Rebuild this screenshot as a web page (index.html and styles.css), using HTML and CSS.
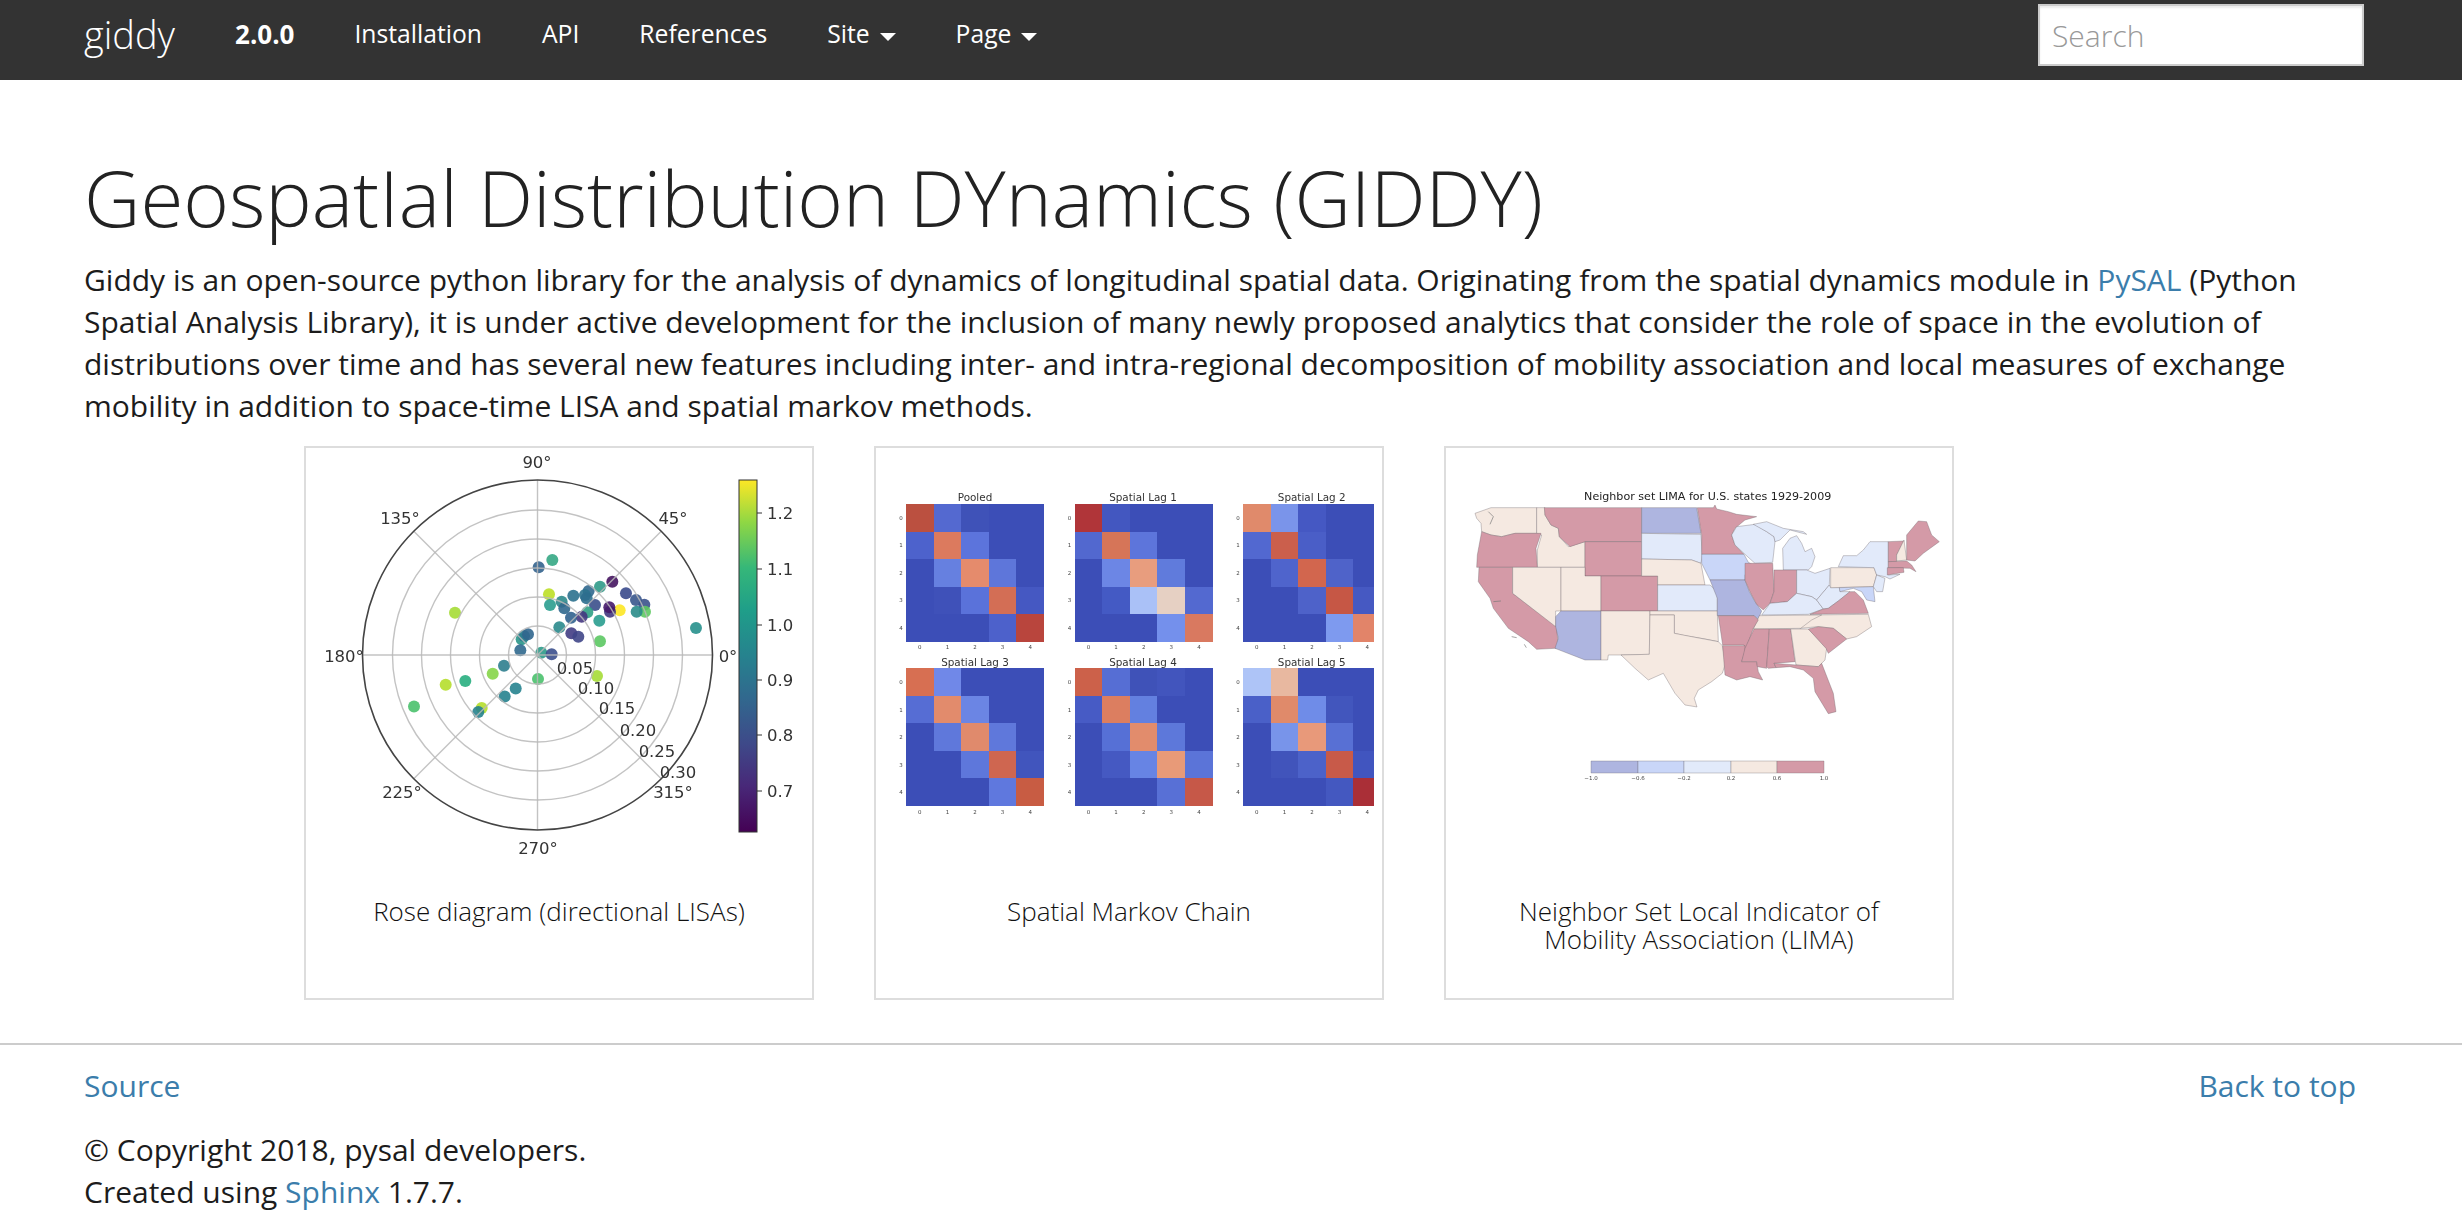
FILE: index.html
```html
<!DOCTYPE html>
<html lang="en">
<head>
<meta charset="utf-8">
<title>Geospatial Distribution DYnamics (GIDDY)</title>
<link rel="stylesheet" href="styles.css">
</head>
<body>
<nav class="navbar">
  <a class="brand" href="#">giddy</a>
  <span class="version">2.0.0</span>
  <a class="nav-link" href="#">Installation</a>
  <a class="nav-link" href="#">API</a>
  <a class="nav-link" href="#">References</a>
  <a class="nav-link" href="#">Site<span class="caret"></span></a>
  <a class="nav-link" href="#">Page<span class="caret"></span></a>
  <input class="search" type="text" placeholder="Search">
</nav>
<main class="content">
  <h1>GeospatIal Distribution DYnamics (GIDDY)</h1>
  <p class="intro">Giddy is an open-source python library for the analysis of dynamics of longitudinal spatial data. Originating from the spatial dynamics module in <a href="#">PySAL</a> (Python Spatial Analysis Library), it is under active development for the inclusion of many newly proposed analytics that consider the role of space in the evolution of distributions over time and has several new features including inter- and intra-regional decomposition of mobility association and local measures of exchange mobility in addition to space-time LISA and spatial markov methods.</p>
  <div class="gallery">
    <figure class="card">
      <svg class="plot" viewBox="306 448 506 449" width="506" height="449">
        <defs>
          <linearGradient id="viridis" x1="0" y1="1" x2="0" y2="0">
            <stop offset="0" stop-color="#440154"/>
            <stop offset=".13" stop-color="#482878"/>
            <stop offset=".25" stop-color="#3e4989"/>
            <stop offset=".38" stop-color="#31688e"/>
            <stop offset=".5" stop-color="#26828e"/>
            <stop offset=".63" stop-color="#1f9e89"/>
            <stop offset=".75" stop-color="#35b779"/>
            <stop offset=".88" stop-color="#8fd744"/>
            <stop offset="1" stop-color="#fde725"/>
          </linearGradient>
        </defs>
        <g class="dots" transform="translate(500 530) scale(.3333)">
          <circle cx="157" cy="90" r="18" fill="#35a784"/>
          <circle cx="116" cy="112" r="18" fill="#33638d"/>
          <circle cx="147" cy="193" r="18" fill="#bddf26"/>
          <circle cx="150" cy="225" r="18" fill="#2a9d8f"/>
          <circle cx="185" cy="215" r="18" fill="#2d8a8c"/>
          <circle cx="193" cy="235" r="18" fill="#31688e"/>
          <circle cx="220" cy="197" r="18" fill="#2c718e"/>
          <circle cx="266" cy="183" r="18" fill="#31688e"/>
          <circle cx="255" cy="195" r="18" fill="#2c728e"/>
          <circle cx="260" cy="205" r="18" fill="#2e6e8e"/>
          <circle cx="300" cy="170" r="18" fill="#2f9a88"/>
          <circle cx="337" cy="155" r="18" fill="#45145f"/>
          <circle cx="378" cy="190" r="18" fill="#3a4a8c"/>
          <circle cx="433" cy="224" r="18" fill="#3b528b"/>
          <circle cx="408" cy="210" r="18" fill="#39568c"/>
          <circle cx="435" cy="245" r="18" fill="#5ec962"/>
          <circle cx="410" cy="245" r="18" fill="#2a8c8a"/>
          <circle cx="359" cy="241" r="18" fill="#fde725"/>
          <circle cx="330" cy="245" r="18" fill="#433880"/>
          <circle cx="328" cy="232" r="18" fill="#46196a"/>
          <circle cx="285" cy="225" r="18" fill="#3b4f8b"/>
          <circle cx="262" cy="247" r="18" fill="#30a085"/>
          <circle cx="245" cy="260" r="18" fill="#453781"/>
          <circle cx="213" cy="263" r="18" fill="#31628e"/>
          <circle cx="298" cy="272" r="18" fill="#2a9d8f"/>
          <circle cx="178" cy="292" r="18" fill="#2a8a8c"/>
          <circle cx="214" cy="310" r="18" fill="#433d84"/>
          <circle cx="235" cy="320" r="18" fill="#404688"/>
          <circle cx="300" cy="334" r="18" fill="#5cc863"/>
          <circle cx="588" cy="294" r="18" fill="#27908c"/>
          <circle cx="65" cy="328" r="18" fill="#2a9688"/>
          <circle cx="72" cy="318" r="18" fill="#2d7d8e"/>
          <circle cx="84" cy="313" r="18" fill="#31668e"/>
          <circle cx="61" cy="361" r="18" fill="#30698e"/>
          <circle cx="124" cy="368" r="18" fill="#2c9a88"/>
          <circle cx="155" cy="373" r="18" fill="#3b4f8c"/>
          <circle cx="12" cy="407" r="18" fill="#2e7e8e"/>
          <circle cx="114" cy="447" r="18" fill="#4ac16d"/>
          <circle cx="291" cy="438" r="18" fill="#a5db36"/>
        </g>
        <g class="dots">
          <circle cx="455" cy="612.7" r="6" fill="#a5db36"/>
          <circle cx="492.7" cy="673.8" r="6" fill="#86d549"/>
          <circle cx="465.3" cy="681.1" r="6" fill="#28ae80"/>
          <circle cx="445.7" cy="684.7" r="6" fill="#b5de2b"/>
          <circle cx="414" cy="706.5" r="6" fill="#4ac16d"/>
          <circle cx="515.7" cy="688.4" r="6" fill="#26838f"/>
          <circle cx="504.7" cy="696.4" r="6" fill="#26828e"/>
          <circle cx="481.7" cy="708" r="6" fill="#b5de2b"/>
          <circle cx="478.3" cy="712" r="6" fill="#26828e"/>
        </g>
        <g class="grid">
          <circle cx="537.5" cy="655" r="29"/>
          <circle cx="537.5" cy="655" r="58"/>
          <circle cx="537.5" cy="655" r="87"/>
          <circle cx="537.5" cy="655" r="116"/>
          <circle cx="537.5" cy="655" r="145"/>
          <line x1="362.5" y1="655" x2="712.5" y2="655"/>
          <line x1="537.5" y1="480" x2="537.5" y2="830"/>
          <line x1="413.8" y1="531.3" x2="661.2" y2="778.7"/>
          <line x1="413.8" y1="778.7" x2="661.2" y2="531.3"/>
        </g>
        <circle class="rim" cx="537.5" cy="655" r="175"/>
        <g class="mpl">
          <text x="537" y="462">90°</text>
          <text x="673" y="518">45°</text>
          <text x="400" y="518">135°</text>
          <text x="344" y="656">180°</text>
          <text x="728" y="656">0°</text>
          <text x="402" y="792">225°</text>
          <text x="673" y="792">315°</text>
          <text x="538" y="848">270°</text>
          <text x="575" y="668">0.05</text>
          <text x="596" y="688">0.10</text>
          <text x="617" y="708">0.15</text>
          <text x="638" y="730">0.20</text>
          <text x="657" y="751">0.25</text>
          <text x="678" y="772">0.30</text>
        </g>
        <rect class="cbar" x="739" y="480" width="18" height="352" fill="url(#viridis)"/>
        <g class="cticks">
          <line x1="757" y1="513" x2="762" y2="513"/>
          <line x1="757" y1="569" x2="762" y2="569"/>
          <line x1="757" y1="625" x2="762" y2="625"/>
          <line x1="757" y1="680" x2="762" y2="680"/>
          <line x1="757" y1="735" x2="762" y2="735"/>
          <line x1="757" y1="791" x2="762" y2="791"/>
        </g>
        <g class="mpl mpl-start">
          <text x="767" y="513">1.2</text>
          <text x="767" y="569">1.1</text>
          <text x="767" y="625">1.0</text>
          <text x="767" y="680">0.9</text>
          <text x="767" y="735">0.8</text>
          <text x="767" y="791">0.7</text>
        </g>
      </svg>
      <figcaption>Rose diagram (directional LISAs)</figcaption>
    </figure>
    <figure class="card">
      <svg class="plot" viewBox="876 448 506 449" width="506" height="449">
        <defs>
          <clipPath id="third"><rect x="1243" y="480" width="131" height="350"/></clipPath>
          <g id="xt" class="tiny">
            <text x="13.8" y="0">0</text><text x="41.4" y="0">1</text><text x="69" y="0">2</text><text x="96.6" y="0">3</text><text x="124.2" y="0">4</text>
          </g>
          <g id="yt" class="tiny">
            <text x="0" y="13.8">0</text><text x="0" y="41.3">1</text><text x="0" y="68.8">2</text><text x="0" y="96.3">3</text><text x="0" y="123.8">4</text>
          </g>
        </defs>
        <g class="heat" transform="translate(906 504) scale(27.6 27.5)">
          <rect width="5" height="5" fill="#3c4eb7"/>
          <rect x="0" y="0" width="1" height="1" fill="#bb5040"/><rect x="1" y="0" width="1" height="1" fill="#5469d0"/><rect x="2" y="0" width="1" height="1" fill="#3f52b8"/>
          <rect x="0" y="1" width="1" height="1" fill="#4d62cc"/><rect x="1" y="1" width="1" height="1" fill="#dc7a5e"/><rect x="2" y="1" width="1" height="1" fill="#5c74dc"/>
          <rect x="1" y="2" width="1" height="1" fill="#6680e0"/><rect x="2" y="2" width="1" height="1" fill="#e58b6c"/><rect x="3" y="2" width="1" height="1" fill="#5e76da"/>
          <rect x="1" y="3" width="1" height="1" fill="#3f51b9"/><rect x="2" y="3" width="1" height="1" fill="#5a72da"/><rect x="3" y="3" width="1" height="1" fill="#d36e55"/><rect x="4" y="3" width="1" height="1" fill="#4558c2"/>
          <rect x="3" y="4" width="1" height="1" fill="#4d61cb"/><rect x="4" y="4" width="1" height="1" fill="#b9453d"/>
        </g>
        <g class="heat" transform="translate(1074.7 504) scale(27.6 27.5)">
          <rect width="5" height="5" fill="#3c4eb7"/>
          <rect x="0" y="0" width="1" height="1" fill="#b03539"/><rect x="1" y="0" width="1" height="1" fill="#4357c0"/>
          <rect x="0" y="1" width="1" height="1" fill="#5268cf"/><rect x="1" y="1" width="1" height="1" fill="#d67558"/><rect x="2" y="1" width="1" height="1" fill="#5d75db"/>
          <rect x="1" y="2" width="1" height="1" fill="#6c86e5"/><rect x="2" y="2" width="1" height="1" fill="#e89d7e"/><rect x="3" y="2" width="1" height="1" fill="#607bdc"/>
          <rect x="1" y="3" width="1" height="1" fill="#445ac4"/><rect x="2" y="3" width="1" height="1" fill="#aac1f7"/><rect x="3" y="3" width="1" height="1" fill="#e6d0c3"/><rect x="4" y="3" width="1" height="1" fill="#5369d0"/>
          <rect x="3" y="4" width="1" height="1" fill="#7490ec"/><rect x="4" y="4" width="1" height="1" fill="#d97960"/>
        </g>
        <g clip-path="url(#third)">
          <g class="heat" transform="translate(1243 504) scale(27.6 27.5)">
            <rect width="5" height="5" fill="#3c4eb7"/>
            <rect x="0" y="0" width="1" height="1" fill="#e08a6b"/><rect x="1" y="0" width="1" height="1" fill="#7a94ea"/><rect x="2" y="0" width="1" height="1" fill="#4558c3"/>
            <rect x="0" y="1" width="1" height="1" fill="#5268d0"/><rect x="1" y="1" width="1" height="1" fill="#cb5f4c"/><rect x="2" y="1" width="1" height="1" fill="#4a5ec7"/>
            <rect x="1" y="2" width="1" height="1" fill="#4f64cc"/><rect x="2" y="2" width="1" height="1" fill="#d2664e"/><rect x="3" y="2" width="1" height="1" fill="#4f63c9"/>
            <rect x="2" y="3" width="1" height="1" fill="#4e62c9"/><rect x="3" y="3" width="1" height="1" fill="#c65745"/><rect x="4" y="3" width="1" height="1" fill="#4659c2"/>
            <rect x="3" y="4" width="1" height="1" fill="#7e9aef"/><rect x="4" y="4" width="1" height="1" fill="#e28469"/>
          </g>
        </g>
        <g class="heat" transform="translate(906 668.4) scale(27.6 27.5)">
          <rect width="5" height="5" fill="#3c4eb7"/>
          <rect x="0" y="0" width="1" height="1" fill="#d76f52"/><rect x="1" y="0" width="1" height="1" fill="#7088e8"/>
          <rect x="0" y="1" width="1" height="1" fill="#566dd4"/><rect x="1" y="1" width="1" height="1" fill="#e28b6c"/><rect x="2" y="1" width="1" height="1" fill="#6b85e4"/>
          <rect x="1" y="2" width="1" height="1" fill="#5f78db"/><rect x="2" y="2" width="1" height="1" fill="#e08a6c"/><rect x="3" y="2" width="1" height="1" fill="#5f78db"/>
          <rect x="2" y="3" width="1" height="1" fill="#5e77db"/><rect x="3" y="3" width="1" height="1" fill="#cf6650"/><rect x="4" y="3" width="1" height="1" fill="#4155bd"/>
          <rect x="3" y="4" width="1" height="1" fill="#5f78de"/><rect x="4" y="4" width="1" height="1" fill="#c85c43"/>
        </g>
        <g class="heat" transform="translate(1074.7 668.4) scale(27.6 27.5)">
          <rect width="5" height="5" fill="#3c4eb7"/>
          <rect x="0" y="0" width="1" height="1" fill="#cc614a"/><rect x="1" y="0" width="1" height="1" fill="#566ed4"/><rect x="2" y="0" width="1" height="1" fill="#3f52b8"/><rect x="3" y="0" width="1" height="1" fill="#4255bd"/>
          <rect x="0" y="1" width="1" height="1" fill="#475bc5"/><rect x="1" y="1" width="1" height="1" fill="#dc7e60"/><rect x="2" y="1" width="1" height="1" fill="#6380e0"/>
          <rect x="1" y="2" width="1" height="1" fill="#5670d6"/><rect x="2" y="2" width="1" height="1" fill="#e28c6c"/><rect x="3" y="2" width="1" height="1" fill="#5d78da"/>
          <rect x="1" y="3" width="1" height="1" fill="#4559c2"/><rect x="2" y="3" width="1" height="1" fill="#6784e4"/><rect x="3" y="3" width="1" height="1" fill="#e89a78"/><rect x="4" y="3" width="1" height="1" fill="#5b74d8"/>
          <rect x="3" y="4" width="1" height="1" fill="#5870d6"/><rect x="4" y="4" width="1" height="1" fill="#c65848"/>
        </g>
        <g clip-path="url(#third)">
          <g class="heat" transform="translate(1243 668.4) scale(27.6 27.5)">
            <rect width="5" height="5" fill="#3c4eb7"/>
            <rect x="0" y="0" width="1" height="1" fill="#aec4f7"/><rect x="1" y="0" width="1" height="1" fill="#e8b8a0"/>
            <rect x="0" y="1" width="1" height="1" fill="#4a60c8"/><rect x="1" y="1" width="1" height="1" fill="#e08a6a"/><rect x="2" y="1" width="1" height="1" fill="#6f8ce8"/><rect x="3" y="1" width="1" height="1" fill="#4256bd"/>
            <rect x="1" y="2" width="1" height="1" fill="#7894ea"/><rect x="2" y="2" width="1" height="1" fill="#e8997a"/><rect x="3" y="2" width="1" height="1" fill="#5870d4"/>
            <rect x="1" y="3" width="1" height="1" fill="#4154bb"/><rect x="2" y="3" width="1" height="1" fill="#4c62c9"/><rect x="3" y="3" width="1" height="1" fill="#c85a49"/><rect x="4" y="3" width="1" height="1" fill="#4155bf"/>
            <rect x="3" y="4" width="1" height="1" fill="#4458c0"/><rect x="4" y="4" width="1" height="1" fill="#aa2f37"/>
          </g>
        </g>
        <g class="titles">
          <text x="975" y="497">Pooled</text>
          <text x="1143" y="497">Spatial Lag 1</text>
          <text x="1311.7" y="497">Spatial Lag 2</text>
          <text x="975" y="662">Spatial Lag 3</text>
          <text x="1143" y="662">Spatial Lag 4</text>
          <text x="1311.7" y="662">Spatial Lag 5</text>
        </g>
        <use href="#xt" x="906" y="647"/><use href="#xt" x="1074.7" y="647"/><use href="#xt" x="1243" y="647"/>
        <use href="#xt" x="906" y="811.5"/><use href="#xt" x="1074.7" y="811.5"/><use href="#xt" x="1243" y="811.5"/>
        <use href="#yt" x="901" y="504"/><use href="#yt" x="1069.5" y="504"/><use href="#yt" x="1238" y="504"/>
        <use href="#yt" x="901" y="668.4"/><use href="#yt" x="1069.5" y="668.4"/><use href="#yt" x="1238" y="668.4"/>
      </svg>
      <figcaption>Spatial Markov Chain</figcaption>
    </figure>
    <figure class="card">
      <svg class="plot" viewBox="1446 448 506 449" width="506" height="449">
        <text class="map-title" x="1707.7" y="496">Neighbor set LIMA for U.S. states 1929-2009</text>
        <g class="map" transform="translate(1465 485) scale(.3333)">
          <polygon class="peach" points="30,85 78,68 215,68 215,145 150,145 110,155 78,150 50,140 48,115 35,100"/>
          <polygon class="peach" points="215,68 240,68 240,90 258,120 280,130 283,155 310,185 360,170 360,247 217,247 217,195 230,150 215,145"/>
          <polygon class="pink" points="238,68 530,68 530,170 360,170 315,185 283,155 280,130 258,120 240,90"/>
          <polygon class="pink" points="360,170 530,170 530,273 360,273"/>
          <polygon class="pink" points="50,140 78,150 110,155 150,145 228,145 213,190 217,247 35,247 37,210"/>
          <polygon class="pink" points="42,247 143,247 143,325 275,425 280,490 270,490 215,493 190,470 130,430 85,370 75,340 40,290"/>
          <polygon class="peach" points="143,247 288,247 288,378 272,378 272,425 143,325"/>
          <polygon class="peach" points="288,247 360,247 360,273 408,273 408,378 288,378"/>
          <polygon class="pink" points="408,273 578,273 578,378 408,378"/>
          <polygon class="blue" points="288,378 408,378 408,525 360,525 270,490 280,460 272,425 272,395"/>
          <polygon class="peach" points="408,378 555,378 553,508 465,510 430,510 428,525 408,525"/>
          <polygon class="blue" points="530,68 695,68 708,145 530,145"/>
          <polygon class="pale" points="530,145 708,148 712,210 708,235 680,225 530,222"/>
          <polygon class="peach" points="530,222 680,225 708,235 720,300 578,300 578,273 530,273"/>
          <polygon class="pale" points="578,300 735,300 757,320 757,378 578,378"/>
          <polygon class="peach" points="555,378 757,378 760,470 720,462 660,452 628,445 628,390 555,390"/>
          <polygon class="peach" points="555,390 628,390 628,445 680,455 760,470 772,482 782,535 772,565 740,590 700,615 688,640 696,666 660,660 630,625 595,565 550,585 510,550 468,510 553,508"/>
          <path class="detail" d="M70,80 L85,95 L75,118 M140,455 L155,458 M178,478 L184,488 M85,350 L108,348"/>
        </g>
        <g class="map" transform="translate(1700 485) scale(.3333)">
          <polygon class="pink" points="-8,68 40,68 45,60 50,72 85,80 110,88 170,95 135,105 105,130 95,150 105,180 132,208 5,208 5,150"/>
          <polygon class="mid" points="5,208 132,208 145,232 160,240 135,270 135,285 30,285 5,235"/>
          <polygon class="blue" points="30,285 135,285 148,320 165,350 185,378 175,403 162,392 52,392 52,340"/>
          <polygon class="pale" points="110,125 165,118 200,140 222,155 225,170 218,232 165,235 135,208 105,180 95,150"/>
          <polygon class="pale" points="160,118 200,110 250,130 310,140 320,148 270,135 240,165 225,170 222,155 200,140"/>
          <polygon class="pale" points="250,255 248,190 270,160 290,152 305,175 315,200 335,190 345,215 335,245 325,255"/>
          <polygon class="pink" points="135,235 218,235 222,320 210,355 190,375 170,358 150,320 135,285 135,270"/>
          <polygon class="pink" points="222,255 290,255 290,325 262,350 210,355 222,320"/>
          <polygon class="pale" points="290,255 320,255 345,265 390,250 388,300 350,345 335,335 290,325"/>
          <polygon class="pale" points="185,390 210,355 262,350 290,325 335,335 350,345 370,372 325,388"/>
          <polygon class="pale" points="350,345 388,300 392,308 418,308 420,320 450,320 415,348 385,370 370,372"/>
          <polygon class="peach" points="392,248 522,248 530,270 520,305 392,308"/>
          <polygon class="pale" points="415,245 430,212 470,212 490,195 510,170 565,170 565,270 600,268 570,282 555,275 530,270 522,248"/>
          <polygon class="pink" points="565,170 612,168 590,210 590,230 565,230"/>
          <polygon class="peach" points="612,165 620,225 590,228 590,210"/>
          <polygon class="pink" points="620,150 655,108 680,110 695,150 718,170 670,205 645,228 620,225"/>
          <polygon class="pink" points="565,230 620,228 635,240 648,260 630,250 565,248"/>
          <polygon class="pink" points="562,248 610,248 612,262 562,270"/>
          <polygon class="pale" points="530,270 555,280 548,320 530,320 520,305"/>
          <polygon class="mid" points="418,308 520,305 525,350 500,345 485,320 460,310 420,320"/>
          <polygon class="pink" points="330,388 370,372 385,370 415,348 450,320 465,320 490,345 505,385"/>
          <polygon class="peach" points="300,430 330,390 505,388 515,425 470,455 440,462 400,430 355,425"/>
          <polygon class="peach" points="160,432 178,392 365,390 335,405 302,430"/>
          <polygon class="pink" points="55,392 162,392 175,405 160,430 135,500 132,480 68,480"/>
          <polygon class="pink" points="68,482 135,482 135,500 125,530 170,530 175,560 188,585 150,575 110,585 75,570"/>
          <polygon class="pink" points="162,432 208,432 200,550 172,545 170,530 125,530 135,490"/>
          <polygon class="pink" points="208,432 272,432 285,530 222,535 228,548 205,550 200,545"/>
          <polygon class="peach" points="272,432 325,432 380,490 375,525 355,545 288,540"/>
          <polygon class="pink" points="325,432 355,425 400,430 440,462 385,505 378,490"/>
          <polygon class="pink" points="222,535 288,540 355,545 365,535 400,625 408,680 385,686 345,620 340,580 310,555 270,545 228,548"/>
        </g>
        <g class="map">
          <rect class="blue" x="1591" y="761" width="47" height="12"/>
          <rect class="mid" x="1638" y="761" width="46" height="12"/>
          <rect class="pale" x="1684" y="761" width="47" height="12"/>
          <rect class="peach" x="1731" y="761" width="46" height="12"/>
          <rect class="pink" x="1777" y="761" width="47" height="12"/>
        </g>
        <g class="tiny legend-ticks">
          <text x="1591" y="778">−1.0</text>
          <text x="1638" y="778">−0.6</text>
          <text x="1684" y="778">−0.2</text>
          <text x="1731" y="778">0.2</text>
          <text x="1777" y="778">0.6</text>
          <text x="1824" y="778">1.0</text>
        </g>
      </svg>
      <figcaption>Neighbor Set Local Indicator of Mobility Association (LIMA)</figcaption>
    </figure>
  </div>
</main>
<footer class="footer">
  <div class="footer-links">
    <a href="#">Source</a>
    <a class="back" href="#">Back to top</a>
  </div>
  <p class="copy">© Copyright 2018, pysal developers.<br>Created using <a href="#">Sphinx</a> 1.7.7.</p>
</footer>
</body>
</html>
```

FILE: styles.css
```css
* { box-sizing: border-box; }
html, body { margin: 0; padding: 0; }
body {
  background: #fff;
  color: #1c1c1c;
  font-family: "Open Sans", "Noto Sans", sans-serif;
  font-size: 30px;
  line-height: 42px;
}
a { color: #3b7dab; text-decoration: none; }

.navbar {
  height: 80px;
  background: #333;
  display: flex;
  align-items: flex-start;
  padding: 0 98px 0 84px;
}
.brand {
  color: #fff;
  font-size: 38px;
  font-weight: 300;
  line-height: 68px;
  padding-right: 30px;
}
.version {
  color: #fff;
  font-size: 26px;
  font-weight: 700;
  line-height: 68px;
  padding: 0 30px;
}
.nav-link {
  color: #fff;
  font-size: 24.7px;
  font-weight: 400;
  line-height: 68px;
  padding: 0 30px;
  display: flex;
  align-items: center;
}
.caret {
  width: 0;
  height: 0;
  margin-left: 10px;
  margin-top: 6px;
  border-left: 8px solid transparent;
  border-right: 8px solid transparent;
  border-top: 8px solid #fff;
}
.search {
  margin: 4px 0 0 auto;
  width: 326px;
  height: 62px;
  border: 2px solid #ccc;
  border-radius: 0;
  background: #fff;
  box-shadow: inset 0 2px 2px rgba(0,0,0,.08);
  padding: 0 12px;
  font-family: inherit;
  font-size: 30px;
  font-weight: 300;
  outline: none;
}
.search::placeholder { color: #999; opacity: 1; }

.content { padding: 0 84px; }
h1 {
  margin: 0;
  padding-top: 71px;
  font-size: 78px;
  font-weight: 300;
  line-height: 92px;
  color: #222;
}
.intro { margin: 16px 0 19px; }

.gallery {
  display: flex;
  gap: 60px;
  margin-left: 220px;
}
.card {
  margin: 0;
  width: 510px;
  height: 554px;
  border: 2px solid #ddd;
  display: flex;
  flex-direction: column;
}
.plot {
  display: block;
  flex: none;
  filter: blur(.5px);
}
figcaption {
  padding: 0 30px;
  text-align: center;
  font-size: 26px;
  font-weight: 300;
  line-height: 28px;
  color: #111;
}

.grid circle, .grid line { fill: none; stroke: #b8b8b8; stroke-opacity: .85; stroke-width: 1.4; }
.rim { fill: none; stroke: #444; stroke-width: 1.6; }
.dots circle { opacity: .9; }
.mpl text {
  font-family: "DejaVu Sans", sans-serif;
  font-size: 16.5px;
  fill: #333;
  text-anchor: middle;
  dominant-baseline: central;
}
.mpl-start text { text-anchor: start; }
.cbar { stroke: #333; stroke-width: 1; }
.cticks line { stroke: #333; stroke-width: 1; }

.heat rect { shape-rendering: crispEdges; }
.titles text {
  font-family: "DejaVu Sans", sans-serif;
  font-size: 10.4px;
  fill: #333;
  text-anchor: middle;
  dominant-baseline: central;
}
.tiny text {
  font-family: "DejaVu Sans", sans-serif;
  font-size: 5.5px;
  fill: #444;
  text-anchor: middle;
  dominant-baseline: central;
}
.map-title {
  font-family: "DejaVu Sans", sans-serif;
  font-size: 11.1px;
  fill: #222;
  text-anchor: middle;
  dominant-baseline: central;
}
.map polygon, .map rect { stroke: #6d6468; stroke-opacity: .55; stroke-width: 2; stroke-linejoin: round; }
.map rect { stroke-width: .6; }
.detail { fill: none; stroke: #777; stroke-width: 2; }
.pink { fill: #d49aa7; }
.peach { fill: #f5e9e1; }
.pale { fill: #e2eafa; }
.mid { fill: #c9d6f8; }
.blue { fill: #aeb5e0; }

.footer {
  margin-top: 43px;
  border-top: 2px solid #ccc;
  padding: 20px 84px 0;
}
.footer-links {
  display: flex;
  justify-content: space-between;
  padding-right: 22px;
}
.copy { margin: 22px 0 0; }
```
